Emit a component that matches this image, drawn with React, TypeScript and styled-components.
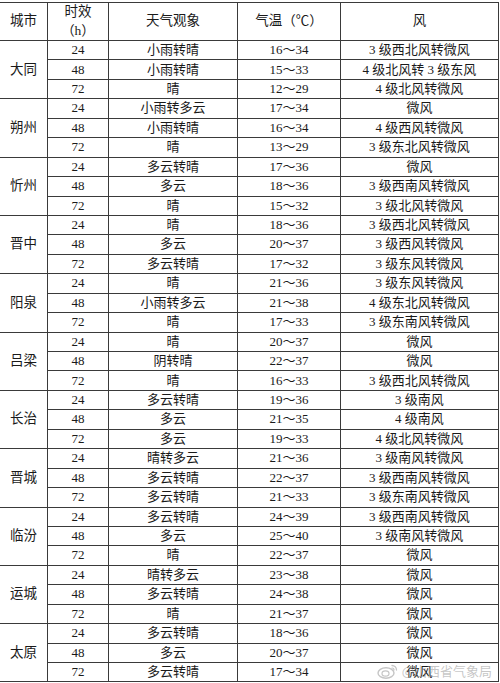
import React from "react";
import styled, { createGlobalStyle } from "styled-components";

const GlobalStyle = createGlobalStyle`
  html, body {
    margin: 0;
    padding: 0;
    background: #ffffff;
  }
`;

const Page = styled.div`
  position: relative;
  width: 500px;
  height: 683px;
  overflow: hidden;
  background: #ffffff;
  padding-top: 2px;
  box-sizing: border-box;
`;

const Table = styled.div`
  display: grid;
  grid-template-columns: 48px 61px 129px 103px 158px;
  grid-template-rows: 38px repeat(33, 19.45px);
  width: 499px;
  border-top: 1px solid #3a3a3a;
  box-sizing: border-box;
  font-family: "Liberation Serif", "Noto Sans CJK SC", serif;
  font-size: 13px;
  color: #1a1a1a;
`;

const Cell = styled.div<{ $span?: number; $wrap?: boolean }>`
  grid-row: span ${(p) => p.$span ?? 1};
  display: flex;
  flex-direction: ${(p) => (p.$wrap ? "column" : "row")};
  align-items: center;
  justify-content: center;
  border-right: 1px solid #3a3a3a;
  border-bottom: 1px solid #3a3a3a;
  box-sizing: border-box;
  line-height: 1.25;
  white-space: nowrap;
  overflow: hidden;
`;

const HeadCell = styled(Cell)`
  font-size: 13.5px;
  line-height: 1.35;
`;

const Watermark = styled.div`
  position: absolute;
  right: 8px;
  bottom: 3px;
  display: flex;
  align-items: center;
  gap: 3px;
  font-family: "Noto Sans CJK SC", sans-serif;
  font-size: 13px;
  color: rgba(150, 150, 150, 0.55);
  pointer-events: none;
`;

type Row = [string, string, string, string];

const data: { city: string; rows: Row[] }[] = [
  {
    city: "大同",
    rows: [
      ["24", "小雨转晴", "16～34", "3 级西北风转微风"],
      ["48", "小雨转晴", "15～33", "4 级北风转 3 级东风"],
      ["72", "晴", "12～29", "4 级北风转微风"],
    ],
  },
  {
    city: "朔州",
    rows: [
      ["24", "小雨转多云", "17～34", "微风"],
      ["48", "小雨转晴", "16～34", "4 级西风转微风"],
      ["72", "晴", "13～29", "3 级东北风转微风"],
    ],
  },
  {
    city: "忻州",
    rows: [
      ["24", "多云转晴", "17～36", "微风"],
      ["48", "多云", "18～36", "3 级西南风转微风"],
      ["72", "晴", "15～32", "3 级北风转微风"],
    ],
  },
  {
    city: "晋中",
    rows: [
      ["24", "晴", "18～36", "3 级西北风转微风"],
      ["48", "多云", "20～37", "3 级西风转微风"],
      ["72", "多云转晴", "17～32", "3 级东风转微风"],
    ],
  },
  {
    city: "阳泉",
    rows: [
      ["24", "晴", "21～36", "3 级东风转微风"],
      ["48", "小雨转多云", "21～38", "4 级东北风转微风"],
      ["72", "晴", "17～33", "3 级东南风转微风"],
    ],
  },
  {
    city: "吕梁",
    rows: [
      ["24", "晴", "20～37", "微风"],
      ["48", "阴转晴", "22～37", "微风"],
      ["72", "晴", "16～33", "3 级西北风转微风"],
    ],
  },
  {
    city: "长治",
    rows: [
      ["24", "多云转晴", "19～36", "3 级南风"],
      ["48", "多云", "21～35", "4 级南风"],
      ["72", "多云", "19～33", "4 级北风转微风"],
    ],
  },
  {
    city: "晋城",
    rows: [
      ["24", "晴转多云", "21～36", "3 级南风转微风"],
      ["48", "多云转晴", "22～37", "3 级西南风转微风"],
      ["72", "多云转晴", "21～33", "3 级东南风转微风"],
    ],
  },
  {
    city: "临汾",
    rows: [
      ["24", "多云转晴", "24～39", "3 级西南风转微风"],
      ["48", "多云", "25～40", "3 级南风转微风"],
      ["72", "晴", "22～37", "微风"],
    ],
  },
  {
    city: "运城",
    rows: [
      ["24", "晴转多云", "23～38", "微风"],
      ["48", "多云转晴", "24～38", "微风"],
      ["72", "晴", "21～37", "微风"],
    ],
  },
  {
    city: "太原",
    rows: [
      ["24", "多云转晴", "18～36", "微风"],
      ["48", "多云", "20～37", "微风"],
      ["72", "多云转晴", "17～34", "微风"],
    ],
  },
];

const WeiboIcon = () => (
  <svg width="22" height="16" viewBox="0 0 22 16" fill="none">
    <ellipse cx="9" cy="10" rx="8" ry="5.2" stroke="currentColor" strokeWidth="1.4" />
    <ellipse cx="8.5" cy="10.5" rx="3.5" ry="2.6" stroke="currentColor" strokeWidth="1.2" />
    <path d="M15 2.5c2.5 0 4.5 2 4.5 4.5" stroke="currentColor" strokeWidth="1.3" strokeLinecap="round" />
    <path d="M15 5c1.1 0 2 .9 2 2" stroke="currentColor" strokeWidth="1.2" strokeLinecap="round" />
  </svg>
);

export default function App() {
  return (
    <Page>
      <GlobalStyle />
      <Table>
        <HeadCell>城市</HeadCell>
        <HeadCell $wrap>
          <span>时效</span>
          <span>（h）</span>
        </HeadCell>
        <HeadCell>天气观象</HeadCell>
        <HeadCell>气温（℃）</HeadCell>
        <HeadCell>风</HeadCell>
        {data.map((group) => (
          <React.Fragment key={group.city}>
            {group.rows.map((r, i) => (
              <React.Fragment key={i}>
                {i === 0 && (
                  <HeadCell $span={3}>{group.city}</HeadCell>
                )}
                <Cell>{r[0]}</Cell>
                <Cell>{r[1]}</Cell>
                <Cell>{r[2]}</Cell>
                <Cell>{r[3]}</Cell>
              </React.Fragment>
            ))}
          </React.Fragment>
        ))}
      </Table>
      <Watermark>
        <WeiboIcon />
        <span>@山西省气象局</span>
      </Watermark>
    </Page>
  );
}
